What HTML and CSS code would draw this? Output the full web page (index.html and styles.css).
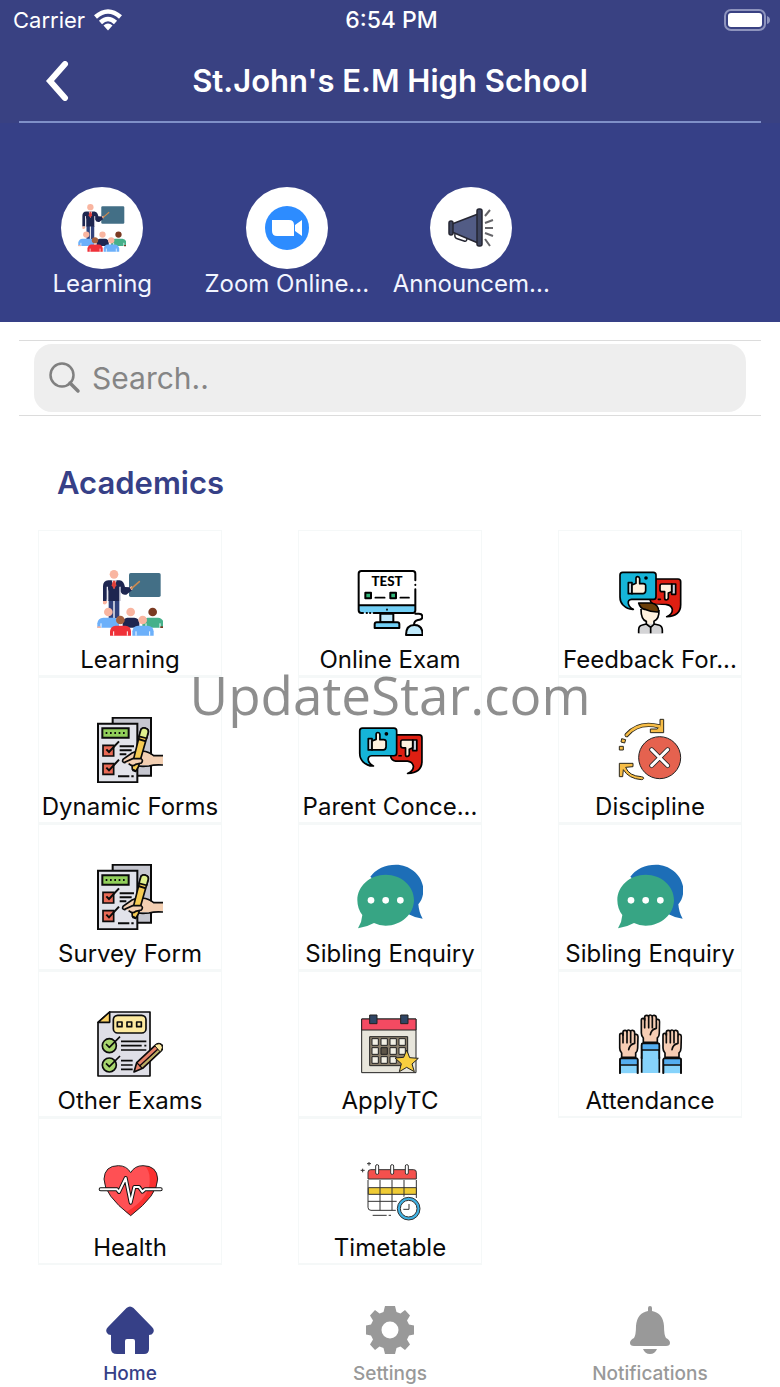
FILE: index.html
```html
<!DOCTYPE html>
<html lang="en">
<head>
<meta charset="utf-8">
<meta name="viewport" content="width=device-width, initial-scale=1">
<title>St.John's E.M High School</title>
<link rel="stylesheet" href="styles.css">
</head>
<body>
<svg class="sprite" aria-hidden="true">
  <symbol id="learning" viewBox="201 150 198 198">
    <rect x="297" y="159" width="95" height="72" rx="5" fill="#436f86"/>
    <path d="M236 240h14v55h-14zM254 240h14v55h-14z" fill="#31427c"/>
    <path d="M219 243v-44q0-17 16-18h34q12 1 16 20l15 1 6 9-17 13q-12 3-18-10v29h-36v-36l-5 36z" fill="#1e2650"/>
    <path d="M232 200v43M270 200v43" stroke="#e8e8f2" stroke-width="4"/>
    <path d="M245 181h15l-8 27z" fill="#fff"/><path d="M249 182h7l3 14-7 12-7-12z" fill="#e0403a"/>
    <circle cx="252" cy="163" r="13" fill="#f9b5a0"/><path d="M219 243h12v5q-5 9-12 3zM299 202l7-4 3 9-5 4z" fill="#f9b5a0"/>
    <path d="M305 205l23-20" stroke="#c98a50" stroke-width="5" stroke-linecap="round"/>
    <path d="M202 323v-13q2-16 18-17h31q15 1 16 17v13z" fill="#6cb0fa"/>
    <path d="M278 323v-14q2-15 14-16h21q14 1 15 17v13z" fill="#1e2650"/>
    <path d="M337 323v-13q2-16 16-17h31q15 1 17 17v13z" fill="#46b08a"/>
    <path d="M213 310v13M348 310v13M390 310v13" stroke="#fff" stroke-width="3"/>
    <circle cx="235" cy="276" r="13" fill="#f9b5a0"/><circle cx="302" cy="276" r="13" fill="#f9b5a0"/><circle cx="368" cy="276" r="13" fill="#7b3a22"/>
    <path d="M202 319h10v5h-10z" fill="#f9b5a0"/><path d="M391 319h10v5h-10z" fill="#7b3a22"/>
    <path d="M240 347v-13q2-16 17-17h29q16 1 17 17v13z" fill="#ef3038"/>
    <path d="M307 347v-13q2-16 17-17h29q16 1 18 17v13z" fill="#6cb0fa"/>
    <path d="M251 334v13M292 334v13M318 334v13M359 334v13" stroke="#fff" stroke-width="3"/>
    <circle cx="271" cy="300" r="13" fill="#a6613f"/><circle cx="338" cy="300" r="13" fill="#f9b5a0"/>
  </symbol>

  <symbol id="bubbles" viewBox="201 150 198 198">
    <g stroke="#000" stroke-width="5" stroke-linejoin="round" stroke-linecap="round">
      <path d="M318 177h66q8 0 8 8v69q0 34-42 36 18-8 17-22-3-12-17-14h-35q-14-2-15-18z" fill="#df1f12"/>
      <path d="M218 157h92q8 0 8 8v65q0 8-8 8h-65q-12 1-10 13 3 12 15 17-17 1-31-13-9-9-9-24v-66q0-8 8-8z" fill="#15b4d8"/>
      <path d="M235 188h11v33h-11z" fill="#c8d2dd"/><path d="M246 195l12-5v-15q0-5 5-5t6 6v15h11q8 0 7 8v13q-1 9-8 9h-33z" fill="#fff2df"/>
      <path d="M365 192h12v31h-12z" fill="#c8d2dd"/><path d="M365 192h-30q-5 0-5 6v11q0 6 7 6h7v20q0 5 5 5t6-6v-15l10-4z" fill="#fff2df"/>
      <circle cx="288" cy="174" r="3"/><path d="M325 238h6"/>
    </g>
  </symbol>

  <symbol id="feedback" viewBox="201 150 198 198">
    <use href="#bubbles" x="201" y="150" width="198" height="198"/>
    <path d="M262 250q0 40 20 55h34q40-14 45-40l-15-9z" fill="#fff"/>
    <path d="M274 265h51v22q-6 15-18 19v9h-15v-9q-14-5-18-19z" fill="#fff2df"/>
    <path d="M266 341v-11q0-15 12-16l11-3h26l11 3q11 2 11 16v11z" fill="#d4d4d6"/>
    <path d="M266 249q19 0 39 0 22 4 21 27-22 1-42-8-13-2-18-19z" fill="#6a3e08"/>
    <path d="M273 267q0 33 16 37v8l-12 3q-11 2-11 15v10M327 270q1 27-15 34v8l14 3q11 3 11 15v10M289 312l13 10 11-10M302 322v18M266 249q19 0 39 0 22 4 21 27-22 1-42-8-13-2-18-19z" fill="none" stroke="#000" stroke-width="5" stroke-linejoin="round"/>
  </symbol>

  <symbol id="concern" viewBox="201 591 198 198">
    <svg x="200" y="617" width="203" height="203" viewBox="201 150 198 198"><use href="#bubbles" x="201" y="150" width="198" height="198"/></svg>
  </symbol>

  <symbol id="form" viewBox="201 591 198 198">
    <g stroke="#0b0b0b" stroke-width="6" stroke-linejoin="miter">
      <path d="M248 593h115v174H248z" fill="#c6c7d0"/>
      <path d="M204 611h118v176H204z" fill="#e2e3ea"/>
      <path d="M217 625h79v28h-79z" fill="#91cf5a"/>
      <path d="M227 639h60" stroke-dasharray="5 8" fill="none"/>
      <path d="M219 676h32v32h-32zM219 731h32v32h-32z" fill="#e96a56" stroke-width="5"/>
      <path d="M229 688l8 8 30-32M229 743l8 8 30-32" fill="none"/>
      <path d="M269 679h43M269 691h36M269 703h20M264 769h34M304 769h7" fill="none"/>
      <path d="M399 707l-28 0-31-14q-19-3-31 4l-26 20q-7 8 3 11l26-1 13 9 37 0 37-4z" fill="#f3cfb2" stroke="none"/>
      <path d="M399 707h-28q-14-12-34-14-19-1-31 6l-26 18q-6 9 4 11l23-8h19M307 735q22 6 50 3 17-5 42-3" fill="none" stroke-width="5"/>
      <path d="M333 628q6-7 14-3 9 3 8 11l-30 105-8 13-10-6-1-12z" fill="#f6cb53" stroke-width="5"/>
      <path d="M333 628q6-7 14-3 9 3 8 11l-5 19-23-6z" fill="#dff08d" stroke-width="5"/><path d="M325 657l23 7M307 750l9 3" fill="none"/>
      <path d="M284 727l24-11h25q8 5 1 13l-17 4q-9 9-21-2" fill="#f3cfb2" stroke-width="5"/>
    </g>
  </symbol>

  <symbol id="discipline" viewBox="201 591 198 198">
    <circle cx="329" cy="713" r="63" fill="#e5624f" stroke="#222" stroke-width="3"/>
    <g fill="none" stroke-linecap="round">
      <path d="M305 689l48 48M353 689l-48 48" stroke="#222" stroke-width="14"/><path d="M305 689l48 48M353 689l-48 48" stroke="#fff" stroke-width="9"/>
      <path d="M230 645q35-42 98-26" stroke="#2b271c" stroke-width="13"/>
    </g>
    <g fill="#f7bd46" stroke="#2b271c" stroke-width="3" stroke-linejoin="round">
      <path d="M330 598h11v40h-40v-11h21l4-6 4-1z"/>
      <path d="M208 770v-40h41v10l-22 2q10 26 47 28 8 1 7 5t-7 4q-38-3-54-30l-2 21z"/>
      <path d="M215 656l12 3-3 10-11-3zM208 679h12v11h-12z"/>
    </g>
    <path d="M230 645q35-42 98-26" stroke="#f7bd46" stroke-width="8" fill="none" stroke-linecap="round"/>
  </symbol>

  <symbol id="chat" viewBox="201 42 198 198">
    <path d="M241 80Q268 44 318 44c44 0 82 35 82 76 0 17-5 31-15 43q2 25 13 43-23-2-42-13z" fill="#1d6eb7"/>
    <path d="M287 74c47 0 85 34 85 76s-38 77-85 77q-19 0-35-8-21 12-48 16 12-20 13-40-15-19-15-45c0-42 38-76 85-76z" fill="#37a584"/>
    <g fill="#fff"><circle cx="243" cy="151" r="10"/><circle cx="287" cy="151" r="10"/><circle cx="331" cy="151" r="10"/></g>
  </symbol>

  <symbol id="other" viewBox="201 483 198 198">
    <g stroke="#0b0b0b" stroke-width="5" stroke-linejoin="round">
      <path d="M239 486h121v192H204V518z" fill="#dfdfe7"/><path d="M239 486v31h-35z" fill="#fad164"/>
      <rect x="250" y="496" width="98" height="53" rx="13" fill="#fdeaa0"/>
      <path d="M262 516h14v14h-14zM291 516h14v14h-14zM320 516h14v14h-14z" fill="#fdeaa0"/>
      <circle cx="238" cy="587" r="21" fill="#a8d66e"/><circle cx="238" cy="645" r="21" fill="#a8d66e"/>
      <path d="M228 582l10 10 32-32M228 640l10 10 32-32M273 574h76M273 587h62M343 587h6M273 600h76M273 632h35M273 645h35M273 658h35" fill="none"/>
      <path d="M312 666l8-28 58-54q10-7 18 1 5 8-1 16l-57 54z" fill="#e58168"/>
      <path d="M328 649l56-52" fill="none" stroke-width="4"/>
      <path d="M333 652l55-51" fill="none" stroke="#a9bf63" stroke-width="4"/>
      <path d="M374 587l5-4q9-5 16 2 5 8-1 16l-4 4z" fill="#fdeaa0" stroke-width="3"/><path d="M320 638q10 8 17 18" fill="none" stroke-width="4"/>
    </g>
  </symbol>

  <symbol id="calendar" viewBox="201 483 198 198">
    <g stroke="#222" stroke-width="3">
      <path d="M215 507h163v161H215z" fill="#e8e6dc"/><path d="M215 507h163v33H215z" fill="#f44a62"/>
      <path d="M239 495h22v26h-22zM332 495h22v26h-22z" fill="#2f4564"/>
      <path d="M239 560h114v87H239z" fill="#8a7f6c"/>
      <path d="M246 566h19v20h-19zM273 566h19v20h-19zM300 566h19v20h-19zM327 566h19v20h-19zM246 593h19v20h-19zM300 593h19v20h-19zM327 593h19v20h-19zM246 620h19v20h-19zM273 620h19v20h-19zM300 620h19v20h-19z" fill="#f1efe4"/>
      <path d="M273 593h19v20h-19z" fill="#5d5548"/>
      <path d="M350 600l9 23 26 2-19 17 7 23-23-13-22 13 6-24-19-17 26-2z" fill="#f9cf3f"/>
    </g>
  </symbol>

  <symbol id="hand" viewBox="205 535 62 136">
    <g stroke="#0b0b0b" stroke-width="5" stroke-linejoin="round" stroke-linecap="round">
      <path d="M215 622v-13q-6-6-6-15v-38q0-6 5-6t5 6v-9q0-6 6-6t6 5q0-6 5-6t6 6q0-6 6-5t6 8v9q0-6 5-5t5 7l-1 34q0 10-6 15v13z" fill="#f6cdb4"/>
      <path d="M219 550v28M231 547v31M242 548v30M254 560v20q-15 3-18 19" fill="none"/>
      <path d="M210 670v-41q0-4 4-4h45q4 0 4 4v41" fill="#86d3fb"/><path d="M212 627h49v16h-49z" fill="#55aef0" stroke="none"/><path d="M210 645h53M210 670v-41q0-4 4-4h45q4 0 4 4v41" fill="none"/>
    </g>
  </symbol>

  <symbol id="attendance" viewBox="201 483 198 198">
    <path d="M275 620h53v49h-53z" fill="#86d3fb"/>
    <path d="M275 620v48M328 620v48" stroke="#0b0b0b" stroke-width="5"/>
    <use href="#hand" x="205" y="535" width="62" height="136"/>
    <use href="#hand" x="270" y="490" width="62" height="136"/>
    <use href="#hand" x="335" y="535" width="62" height="136"/>
  </symbol>

  <symbol id="health" viewBox="201 114 198 198">
    <path d="M302 287q-80-62-80-110 2-40 43-40 25 0 37 21 12-21 37-21 42 0 44 40 0 48-81 110z" fill="#ff5054"/>
    <path d="M345 138q38 4 37 39 1 45-80 109l-13-10q74-44 70-99 0-26-14-39z" fill="#fb302f"/>
    <path d="M302 287q-80-62-80-110 2-40 43-40 25 0 37 21 12-21 37-21 42 0 44 40 0 48-81 110z" fill="none" stroke="#222" stroke-width="3"/>
    <path d="M212 208h49l6 8 20-42 15 74 11-47h14l10 14 8-7h47" fill="none" stroke="#111" stroke-width="12" stroke-linejoin="round" stroke-linecap="round"/>
    <path d="M212 208h49l6 8 20-42 15 74 11-47h14l10 14 8-7h47" fill="none" stroke="#fff" stroke-width="6" stroke-linejoin="round" stroke-linecap="round"/>
  </symbol>

  <symbol id="timetable" viewBox="981 114 198 198">
    <g stroke="#333" stroke-width="3" fill="none">
      <path d="M1014 180v82q0 9 9 9h76M1159 180v54M1050 180v91M1086 180v91M1122 180v52M1014 244h86" />
      <path d="M1015 203h144v20h-144z" fill="#efcb35"/><path d="M1050 203v20M1086 203v20M1122 203v20"/>
      <path d="M1014 177v-20q0-8 8-8h129q8 0 8 8v20z" fill="#f4504d"/>
      <path d="M1028 286h42M1076 286h7M1017 126v11M1011 131h12M998 146v11M992 151h12"/>
      <g fill="#fff"><rect x="1037" y="134" width="9" height="29" rx="4"/><rect x="1082" y="134" width="9" height="29" rx="4"/><rect x="1126" y="134" width="9" height="29" rx="4"/></g>
      <circle cx="1136" cy="266" r="39" fill="#fff" stroke="none"/><circle cx="1136" cy="266" r="34" fill="#3fb1e3"/><circle cx="1136" cy="266" r="25" fill="#fff"/>
      <path d="M1137 252v16h-17"/>
    </g>
  </symbol>
</svg>

<div class="app">
  <header class="header">
    <div class="status">
      <div class="carrier">
        <span>Carrier</span>
        <svg class="wifi" viewBox="0 0 28 22" fill="none" stroke="#fff" stroke-width="4.500"><path d="M1.500 8Q14-3 26.500 8M6.500 13.500q7.500-7 15 0"/><path d="M14 21.500l-4.500-5q4.500-4 9 0z" fill="#fff" stroke="none"/></svg>
      </div>
      <span class="clock">6:54 PM</span>
      <svg class="battery" viewBox="0 0 46 22"><rect x="1" y="1" width="40" height="20" rx="6" fill="none" stroke="#8e94bd" stroke-width="2"/><rect x="4" y="4" width="34" height="14" rx="3" fill="#fff"/><path d="M43 7q3 1 3 4t-3 4z" fill="#8e94bd"/></svg>
    </div>
    <div class="titlebar">
      <button class="back" type="button" aria-label="Back"><svg viewBox="0 0 24 40"><path d="M20 3L5 20l15 17" fill="none" stroke="#fff" stroke-width="6" stroke-linecap="round" stroke-linejoin="miter"/></svg></button>
      <h1>St.John's E.M High School</h1>
    </div>
  </header>

  <nav class="shortcuts" aria-label="Shortcuts">
    <a href="#learning-page"><span class="disc"><svg><use href="#learning"/></svg></span><span>Learning</span></a>
    <a href="#zoom-page"><span class="disc"><svg viewBox="0 0 48 48"><circle cx="24" cy="24" r="22" fill="#2d8cff"/><path d="M9 16h17q5 0 5 5v11H14q-5 0-5-5zM32 21l7-5v16l-7-5z" fill="#fff"/></svg></span><span>Zoom Online...</span></a>
    <a href="#announcements"><span class="disc"><svg viewBox="0 0 48 48"><g stroke="#252632" stroke-width="1.500" stroke-linejoin="round"><path d="M8 30q-1 4 3 5l6 2q3 1 3-3" fill="#fff"/><path d="M5 20l26-10v29L5 28z" fill="#525c85"/><rect x="2" y="17" width="4" height="14" rx="2" fill="#3f4660"/><rect x="30" y="5" width="5" height="37" rx="2" fill="#3f4660"/></g><path d="M38 12l5-6M38 19l8-3M38 24h8M38 29l8 3M38 35l5 7" stroke="#66666a" stroke-width="2"/></svg></span><span>Announcem...</span></a>
  </nav>

  <main>
    <form class="search" role="search">
      <label class="field">
        <svg viewBox="0 0 32 32" fill="none" stroke="#808080" aria-hidden="true"><circle cx="13" cy="13" r="11.500" stroke-width="2.500"/><path d="M21 21l8 8" stroke-width="3.500" stroke-linecap="round"/></svg>
        <input type="search" placeholder="Search.." aria-label="Search">
      </label>
    </form>

    <h2>Academics</h2>
    <div class="grid">
      <a class="tile" href="#learning-page"><svg><use href="#learning"/></svg><span>Learning</span></a>
      <a class="tile" href="#online-exam">
        <svg viewBox="201 150 198 198">
          <path d="M206 256h170v15q0 8-7 8H214q-8 0-8-8z" fill="#72cff5"/>
          <g fill="none" stroke="#000" stroke-width="6" stroke-linecap="round" stroke-linejoin="round">
            <path d="M376 181v-20q0-8-8-8H214q-8 0-8 8v110q0 8 8 8h5M376 208v63q0 8-7 8H251M206 256h170M376 194v1M230 279h1M240 279h1"/>
            <path d="M271 281h39v26h-39z" fill="#bfe9fb"/><path d="M260 307h62q6 0 6 6v11h-74v-11q0-6 6-6z" fill="#72cff5"/>
            <path d="M376 281h11q10 0 10 9t-13 10q-12 2-12 15"/>
            <path d="M348 345q0-30 25-30t25 30z" fill="#bfe9fb"/>
            <path d="M256 233h28M331 233h26M291 268v2" stroke-width="5"/>
            <path d="M226 218h17v17h-17zM301 218h17v17h-17z" fill="#32b67a"/>
          </g>
          <text x="291" y="199" class="screen-text">TEST</text>
        </svg>
        <span>Online Exam</span>
      </a>
      <a class="tile" href="#feedback-form"><svg><use href="#feedback"/></svg><span>Feedback For...</span></a>
      <a class="tile" href="#dynamic-forms"><svg><use href="#form"/></svg><span>Dynamic Forms</span></a>
      <a class="tile" href="#parent-concern"><svg><use href="#concern"/></svg><span>Parent Conce...</span></a>
      <a class="tile" href="#discipline-page"><svg><use href="#discipline"/></svg><span>Discipline</span></a>
      <a class="tile" href="#survey-form"><svg><use href="#form"/></svg><span>Survey Form</span></a>
      <a class="tile" href="#sibling-enquiry"><svg><use href="#chat"/></svg><span>Sibling Enquiry</span></a>
      <a class="tile" href="#sibling-enquiry"><svg><use href="#chat"/></svg><span>Sibling Enquiry</span></a>
      <a class="tile" href="#other-exams"><svg><use href="#other"/></svg><span>Other Exams</span></a>
      <a class="tile" href="#apply-tc"><svg><use href="#calendar"/></svg><span>ApplyTC</span></a>
      <a class="tile" href="#attendance-page"><svg><use href="#attendance"/></svg><span>Attendance</span></a>
      <a class="tile" href="#health-page"><svg><use href="#health"/></svg><span>Health</span></a>
      <a class="tile" href="#timetable-page"><svg><use href="#timetable"/></svg><span>Timetable</span></a>
      <div class="watermark">UpdateStar.com</div>
    </div>
  </main>

  <nav class="tabs" aria-label="Main">
    <a class="active" href="#home"><svg viewBox="0 0 48 48"><path d="M20.500 2Q24-1 27.500 2L46 21q3 3 1 6-1 2-4 2v14q0 5-5 5h-9V35q0-2-2-2h-6q-2 0-2 2v13h-8q-6 0-6-5V29q-3 0-4-2-2-3 1-6z"/></svg><span>Home</span></a>
    <a href="#settings"><svg viewBox="0 0 48 48"><path fill-rule="evenodd" d="M19 0h10l1.500 6 4 1.500L39 4l5 5.500-3 5 2 4 5 1v9l-5 1-2 4 3 5-5 5.500-4.500-3.500-4 1.500L29 48H19l-1.500-6-4-1.500L9 44l-5-5.500 3-5-2-4-5-1v-9l5-1 2-4-3-5L9 4l4.500 3.500 4-1.500zM24 15.500a8.500 8.500 0 1 0 0 17 8.500 8.500 0 1 0 0-17z"/></svg><span>Settings</span></a>
    <a href="#notifications"><svg viewBox="0 0 48 48"><path d="M22 5V2q0-2 2-2t2 2v3q11 2 12 15 0 9 2 12 4 2 4 5 0 3-4 3H8q-4 0-4-3 0-3 4-5 2-3 2-12Q11 7 22 5zM17 43h14q-2 5-7 5t-7-5z"/></svg><span>Notifications</span></a>
  </nav>
</div>
</body>
</html>
```
FILE: styles.css
```css
* { box-sizing: border-box; }
body { margin: 0; background: #fff; color: #0a0a0a; font-family: Inter, "Liberation Sans", sans-serif; }
a { color: inherit; text-decoration: none; }
.sprite { position: absolute; width: 0; height: 0; }
.screen-text { font: 900 40px Lato, sans-serif; text-anchor: middle; }

.app { display: flex; flex-direction: column; min-height: 100vh; }

.header { background: #394182; color: #fff; }
.status { display: grid; grid-template-columns: 1fr auto 1fr; align-items: center; height: 40px; padding: 0 10px 0 13px; font-size: 22px; }
.carrier { display: flex; align-items: center; gap: 9px; }
.wifi { width: 28px; height: 22px; }
.clock { font-size: 23px; font-weight: 500; }
.battery { width: 46px; height: 22px; justify-self: end; }
.titlebar { display: grid; grid-template-columns: 48px 1fr 48px; align-items: center; height: 83px; margin: 0 19px; padding: 0 22px; border-bottom: 2px solid #7f90c8; }
.titlebar h1 { margin: 0; font-size: 31px; font-weight: 600; line-height: 40px; text-align: center; }
.back { display: flex; width: 32px; padding: 0 0 0 4px; border: 0; background: none; }
.back svg { width: 24px; height: 40px; }

.shortcuts { display: grid; grid-template-columns: repeat(4, 1fr); padding: 64px 32px 23px 10px; background: #364087; color: #f2f5ff; }
.shortcuts a { display: flex; flex-direction: column; align-items: center; font-size: 24px; line-height: 30px; white-space: nowrap; }
.disc { display: flex; align-items: center; justify-content: center; width: 82px; height: 82px; border-radius: 50%; background: #fff; }
.disc svg { width: 48px; height: 48px; }

.search { margin: 18px 19px 0; padding: 3px 15px; border: solid #dcdcdc; border-width: 1px 0; }
.field { display: flex; align-items: center; gap: 11px; height: 68px; padding: 0 15px; border-radius: 18px; background: #eee; }
.field svg { width: 32px; height: 32px; }
.field input { flex: 1; min-width: 0; padding: 0; border: 0; outline: 0; background: none; font: 400 30px Inter, sans-serif; color: #333; }
.field input::placeholder { color: #858585; opacity: 1; }

h2 { margin: 46px 57px 26px; font-size: 31px; line-height: 42px; font-weight: 600; color: #364087; }

.grid { position: relative; display: grid; grid-template-columns: repeat(3, 1fr); column-gap: 76px; padding: 0 38px; }
.tile { display: flex; flex-direction: column; align-items: center; min-width: 0; height: 147px; padding-top: 39px; border: solid #f5f8f8; border-width: 1px 1px 2px; font-size: 24px; line-height: 30px; white-space: nowrap; }
.tile svg { flex: none; width: 66px; height: 66px; margin-bottom: 9px; }
.watermark { position: absolute; top: 127px; left: 0; right: 0; text-align: center; font: 400 53px/75px "Open Sans", "Noto Sans", sans-serif; color: rgba(60, 60, 60, 0.58); pointer-events: none; }

.tabs { display: grid; grid-template-columns: repeat(3, 1fr); margin-top: auto; padding: 20px 0 1px; color: #999; }
.tabs a { display: flex; flex-direction: column; align-items: center; gap: 8px; font-size: 19px; line-height: 24px; font-weight: 500; }
.tabs svg { width: 48px; height: 48px; fill: currentColor; }
.tabs .active { color: #364087; }
```
